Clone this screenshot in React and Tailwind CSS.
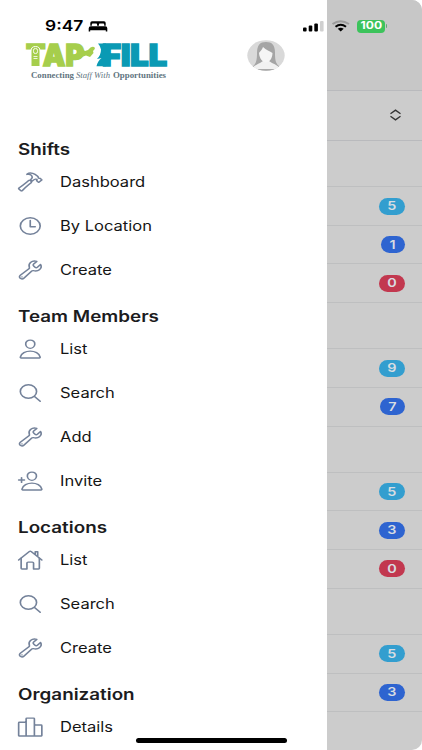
import React from "react";
import {
  IoHammerOutline, IoTimeOutline, IoBuildOutline, IoPersonOutline, IoSearchOutline,
  IoPersonAddOutline, IoHomeOutline, IoPodiumOutline,
} from "react-icons/io5";

const menu = [
  { title: "Shifts", items: [["Dashboard", IoHammerOutline], ["By Location", IoTimeOutline], ["Create", IoBuildOutline]] },
  { title: "Team Members", items: [["List", IoPersonOutline], ["Search", IoSearchOutline], ["Add", IoBuildOutline], ["Invite", IoPersonAddOutline]] },
  { title: "Locations", items: [["List", IoHomeOutline], ["Search", IoSearchOutline], ["Create", IoBuildOutline]] },
  { title: "Organization", items: [["Details", IoPodiumOutline]] },
];

const groups = [
  [["5", "bg-[#339ecf] w-[26.5px]"], ["1", "bg-[#2e64d0] w-[24.5px]"], ["0", "bg-[#c2384f] w-[26.5px]"]],
  [["9", "bg-[#339ecf] w-[26.5px]"], ["7", "bg-[#2e64d0] w-[25.5px]"]],
  [["5", "bg-[#339ecf] w-[26.5px]"], ["3", "bg-[#2e64d0] w-[26.5px]"], ["0", "bg-[#c2384f] w-[26.5px]"]],
  [["5", "bg-[#339ecf] w-[26.5px]"], ["3", "bg-[#2e64d0] w-[26.5px]"]],
];

function Logo() {
  return (
    <svg width="144" height="46" viewBox="0 0 144 46" className="shrink-0 overflow-visible">
      <g fontFamily="Inter, sans-serif" fontWeight="900" fontSize="29.5" strokeWidth="1.600">
        <text x="1" y="28.500" fill="#a6ce4c" stroke="#a6ce4c" textLength="58" lengthAdjust="spacingAndGlyphs">TAP</text>
        <text x="77" y="28.500" fill="#0a9ab4" stroke="#0a9ab4" textLength="65" lengthAdjust="spacingAndGlyphs">FILL</text>
      </g>
      <path d="M52 11q4-2 6 1.500l2 1.500q4-1 5.500-3.500 3-1.500 4.500.5-.5 2-2 3l.5 2-3.500 4-4-1.500q-4 .5-6 3.500h-3z" fill="#a6ce4c" />
      <path d="M73 6.500h8V29.300H71.500q1-5 5-8.300l-4.500 1q4-4 4-9.500-1-4-3-6z" fill="#0a9ab4" />
      <path d="M6 29.500V14q0-4.500 4.500-4.500T15 14v15.500z" fill="#a6ce4c" stroke="#fff" strokeWidth="1" />
      <rect x="8.500" y="11.500" width="4" height="5" rx="1.800" fill="none" stroke="#fff" strokeWidth=".9" />
      <path d="M8.500 19.500h4M8.500 21.500h4" stroke="#fff" strokeWidth=".8" />
      <g fontFamily="'Liberation Serif', serif" fontSize="7.300" fill="#5f7480">
        <text x="6" y="40.500" fontWeight="700" textLength="43" lengthAdjust="spacingAndGlyphs">Connecting</text>
        <text x="51" y="40.500" fontStyle="italic" fontSize="7.800" textLength="34" lengthAdjust="spacingAndGlyphs">Staff With</text>
        <text x="88" y="40.500" fontWeight="700" textLength="53" lengthAdjust="spacingAndGlyphs">Opportunities</text>
      </g>
    </svg>
  );
}

function Avatar() {
  return (
    <svg width="38" height="31" viewBox="0 0 38 31" preserveAspectRatio="none" className="shrink-0">
      <clipPath id="avatar"><ellipse cx="19" cy="15.500" rx="18.700" ry="15.300" /></clipPath>
      <g clipPath="url(#avatar)">
        <rect width="38" height="31" fill="#d9d9d9" />
        <path d="M5 27c4-3 5-6 5-14C10 5 13 2 19 2s9 3 9 11c0 8 1 11 5 14z" fill="#a5a5a5" />
        <path d="M5 29c1-3 4-4 8-6l3-2v-4h6v4l3 2c4 2 7 3 8 6z" fill="#f1f1f1" />
        <path d="M12 13c1-2 3-3 4-6 3 3 7 4 9.500 6-.2 6-3.500 9.500-6.500 9.500s-6.500-3.500-7-9.500z" fill="#f5f5f5" />
        <path d="M4 29h30v3H4z" fill="#aaa" />
      </g>
    </svg>
  );
}

export default function App() {
  return (
    <div className="relative flex h-[750px] w-[422px] overflow-hidden bg-white font-['Inter','Liberation_Sans',sans-serif]">
      <aside className="flex h-full w-[327px] shrink-0 flex-col bg-white">
        <div className="h-[37px] shrink-0" />
        <header className="flex h-[88px] shrink-0 items-start pl-[25px]">
          <Logo />
          <div className="ml-[78px] mt-[2.500px]"><Avatar /></div>
        </header>
        {menu.map((section) => (
          <section key={section.title} className="shrink-0">
            <h2 className="flex h-[35px] items-start pl-[17.500px] pt-[14.400px] text-[15.500px] font-semibold leading-[21px] text-[#1c1c1e]">
              <span className="origin-left scale-x-[1.215] whitespace-nowrap">{section.title}</span>
            </h2>
            {section.items.map(([label, Icon]) => (
              <div key={label} className="flex h-[44px] items-center pl-[17px] text-[14px] text-[#151515]">
                <Icon preserveAspectRatio="none" className="h-[22px] w-[26.500px] shrink-0 text-[#74829a]" />
                <span className="-mt-[2px] ml-[16.200px] origin-left scale-x-[1.180] whitespace-nowrap">{label}</span>
              </div>
            ))}
          </section>
        ))}
      </aside>

      <main className="flex h-full w-[95px] shrink-0 flex-col overflow-hidden rounded-r-[10px] bg-[#cccccc]">
        <div className="h-[91px] shrink-0 border-b border-[#b9babd] bg-[#c7c7c7]" />
        <div className="flex h-[50px] shrink-0 items-center justify-end border-b border-[#b9babd] pb-[1px] pr-[20px]">
          <svg width="13" height="12" viewBox="0 0 13 12" fill="none" stroke="#333" strokeWidth="1.400">
            <path d="M1.500 4.700L6.500 1.200l5 3.500M1.500 7.300l5 3.500 5-3.500" />
          </svg>
        </div>
        {groups.map((rows, i) => (
          <React.Fragment key={i}>
            <div className="h-[46.200px] shrink-0 border-b border-[#bebfc0]" />
            {rows.map(([n, style], j) => (
              <div key={j} className="flex h-[38.650px] shrink-0 items-center justify-end border-b border-[#bebfc0] pr-[17px]">
                <span className={"flex h-[17px] items-center justify-center rounded-full text-[12px] font-semibold text-[#d8dde2] " + style}>
                  <span className="scale-x-[1.2]">{n}</span>
                </span>
              </div>
            ))}
          </React.Fragment>
        ))}
      </main>

      <div className="absolute left-[45px] top-[17px] flex h-[18px] items-center text-black">
        <span className="w-[43px] origin-left scale-x-[1.160] text-[15px] font-semibold">9:47</span>
        <svg width="20" height="11" viewBox="0 0 20 11" className="mt-[1px]">
          <path d="M2.300 4.700V2q0-1.700 1.700-1.700h12Q17.700.3 17.700 2v2.700h-1.500V3.500q0-1-1-1h-3.400q-.9 0-.9 1v1.200H9.100V3.500q0-1-.9-1H4.800q-1 0-1 1v1.200zM.7 7.300q0-2 2-2h14.600q2 0 2 2v3.300h-1.500V9.300H2.200v1.300H.7z" />
        </svg>
      </div>

      <div className="absolute left-[302px] top-[18px] flex h-[16px] items-center">
        <svg width="50" height="14" viewBox="0 0 50 14">
          <rect x="1" y="8.500" width="3.600" height="4" rx="1" />
          <rect x="6.700" y="6.500" width="3.600" height="6" rx="1" />
          <rect x="12.300" y="4.500" width="3.600" height="8" rx="1" />
          <rect x="18" y="2" width="3.600" height="10.500" rx="1" fill="#d0d0d0" />
          <g fill="none" strokeWidth="2">
            <path d="M30.500 5q8-5.500 16.500 0" stroke="#9b9b9b" />
            <path d="M33.500 7.700q5.200-4 10.500 0" stroke="#000" />
          </g>
          <path d="M35.700 9.800q3-2.100 6 0l-3 2.700z" />
        </svg>
        <div className="ml-[5px] flex h-[13px] w-[28px] items-center justify-center rounded-[4px] bg-[#3cc35b] text-[10.500px] font-bold text-white">
          <span className="scale-x-[1.150]">100</span>
        </div>
        <div className="ml-[0.500px] h-[4px] w-[1.500px] rounded-r-full bg-[#5dae6e]" />
      </div>
      <div className="absolute left-[136px] top-[738px] h-[4.500px] w-[151px] rounded-full bg-black" />
    </div>
  );
}
